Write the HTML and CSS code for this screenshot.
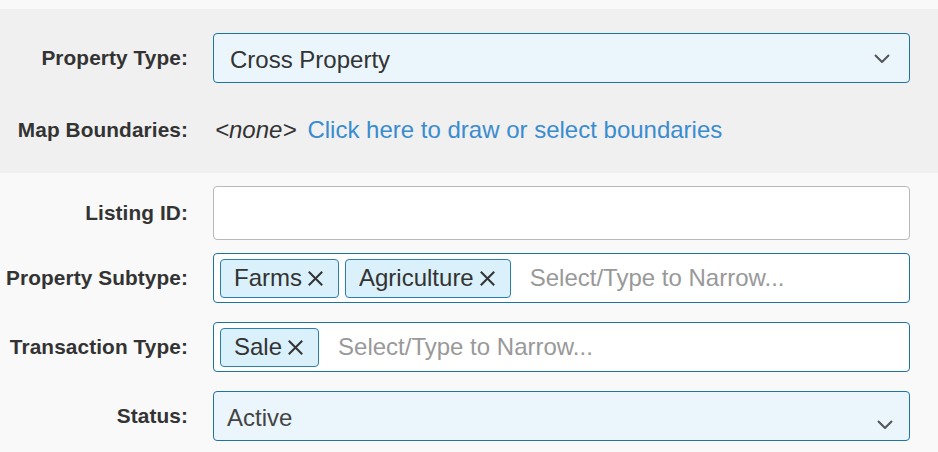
FILE: index.html
```html
<!DOCTYPE html>
<html>
<head>
<meta charset="utf-8">
<link rel="stylesheet" href="styles.css">
</head>
<body>
<div class="page">
  <section class="band">
    <div class="row row-type">
      <label class="lbl">Property Type:</label>
      <div class="select">
        <span class="select-text">Cross Property</span>
        <svg class="chev" width="16" height="9" viewBox="0 0 16 9"><path d="M1 1 L8 8 L15 1" fill="none" stroke="#555" stroke-width="2"/></svg>
      </div>
    </div>
    <div class="row row-map">
      <label class="lbl">Map Boundaries:</label>
      <div class="map">
        <span class="none">&lt;none&gt;</span>
        <a class="link">Click here to draw or select boundaries</a>
      </div>
    </div>
  </section>
  <section class="fields">
    <div class="row row-listing">
      <label class="lbl">Listing ID:</label>
      <div class="input"></div>
    </div>
    <div class="row row-subtype">
      <label class="lbl">Property Subtype:</label>
      <div class="multi">
        <span class="tag">Farms<svg class="x" width="15" height="15" viewBox="0 0 15 15"><path d="M0.8 0.8 L14.2 14.2 M14.2 0.8 L0.8 14.2" stroke="#333" stroke-width="2" fill="none"/></svg></span>
        <span class="tag">Agriculture<svg class="x" width="15" height="15" viewBox="0 0 15 15"><path d="M0.8 0.8 L14.2 14.2 M14.2 0.8 L0.8 14.2" stroke="#333" stroke-width="2" fill="none"/></svg></span>
        <span class="ph">Select/Type to Narrow...</span>
      </div>
    </div>
    <div class="row row-trans">
      <label class="lbl">Transaction Type:</label>
      <div class="multi">
        <span class="tag">Sale<svg class="x" width="15" height="15" viewBox="0 0 15 15"><path d="M0.8 0.8 L14.2 14.2 M14.2 0.8 L0.8 14.2" stroke="#333" stroke-width="2" fill="none"/></svg></span>
        <span class="ph">Select/Type to Narrow...</span>
      </div>
    </div>
    <div class="row row-status">
      <label class="lbl">Status:</label>
      <div class="select select-status">
        <span class="select-text">Active</span>
        <svg class="chev chev-low" width="16" height="9" viewBox="0 0 16 9"><path d="M1 1 L8 8 L15 1" fill="none" stroke="#555" stroke-width="2"/></svg>
      </div>
    </div>
  </section>
</div>
</body>
</html>
```

FILE: styles.css
```css
* { box-sizing: border-box; }
html, body { margin: 0; padding: 0; }
body {
  background: #f9f9f9;
  font-family: "Liberation Sans", Arial, sans-serif;
  color: #333;
  width: 938px;
  height: 452px;
  overflow: hidden;
}
.page { padding-top: 9px; }
.band {
  background: #f0f0f0;
  padding: 24px 28px 18px 0;
}
.fields {
  padding: 13px 28px 0 0;
}
.row {
  display: grid;
  grid-template-columns: 188px 1fr;
  column-gap: 25px;
  align-items: center;
}
.lbl {
  font-weight: bold;
  font-size: 20.8px;
  letter-spacing: 0.1px;
  text-align: right;
  color: #333;
  white-space: nowrap;
}
.select {
  height: 50px;
  border: 1px solid #1d73a3;
  border-radius: 4px;
  background: #eaf6fc;
  display: flex;
  align-items: center;
  padding: 3px 19px 0 16px;
  font-size: 24px;
  color: #333;
}
.select-status { padding-left: 13px; color: #444; }
.select-text { flex: 1; }
.chev { display: block; margin-top: -3px; }
.chev-low { margin-top: 13px; margin-right: -3px; }
.row-map { margin-top: 22px; height: 50px; }
.map {
  display: flex;
  align-items: center;
  font-size: 24px;
  padding-left: 2px;
}
.none { font-style: italic; color: #333; margin-right: 11px; }
.link { color: #3a8ccf; text-decoration: none; cursor: pointer; }
.input {
  height: 54px;
  border: 1px solid #b9b9b9;
  border-radius: 4px;
  background: #fff;
}
.row-subtype { margin-top: 13px; }
.row-trans, .row-status { margin-top: 19px; }
.multi {
  height: 50px;
  border: 1px solid #1d73a3;
  border-radius: 4px;
  background: #fff;
  display: flex;
  align-items: center;
  gap: 6px;
  padding: 0 6px;
  font-size: 24px;
}
.tag {
  height: 39px;
  display: inline-flex;
  align-items: center;
  gap: 6px;
  padding: 0 15px 0 13px;
  background: #daf0fa;
  border: 1px solid #2a7fb0;
  border-radius: 4px;
  color: #333;
}
.x { display: block; }
.ph { color: #999; margin-left: 13px; }
```
